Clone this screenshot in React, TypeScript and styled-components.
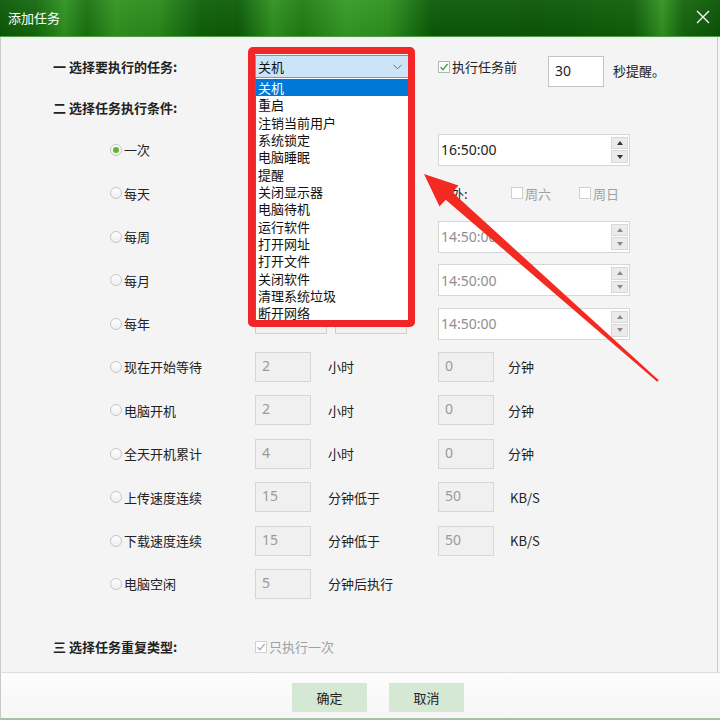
import React from "react";
import styled, { createGlobalStyle } from "styled-components";

const GlobalStyle = createGlobalStyle`
  html, body { margin: 0; padding: 0; background: #ffffff; }
  body { font-family: "Noto Sans CJK SC", "Noto Sans", sans-serif; }
  * { box-sizing: border-box; }
`;

const FONT = `"Noto Sans", "Noto Sans CJK SC", sans-serif`;

const Window = styled.div`
  position: relative;
  width: 720px;
  height: 720px;
  display: flex;
  flex-direction: column;
  overflow: hidden;
  background: #f4f4f4;
  color: #222;
  font-size: 13px;
`;

const TitleBar = styled.div`
  flex: none;
  height: 37px;
  display: flex;
  align-items: center;
  justify-content: space-between;
  padding: 0 10px 2px 8px;
  color: #ffffff;
  font-size: 13px;
  border-bottom: 1px solid #4f9f45;
  background:
    linear-gradient(to bottom, rgba(255, 255, 255, 0.05), rgba(0, 0, 0, 0.06)),
    linear-gradient(
      to right,
      #0b5a08 0%,
      #15690d 5%,
      #2f9220 9%,
      #1a720f 12%,
      #31931f 16%,
      #2a8a1b 22%,
      #0e600a 28%,
      #0c5c08 33%,
      #2f9220 38%,
      #1f7c14 42%,
      #359a25 48%,
      #2d901e 54%,
      #0b5a08 60%,
      #0a5707 75%,
      #0f5f0a 88%,
      #33921f 92%,
      #14650c 95%,
      #0a5507 100%
    );
`;

const Body = styled.div`
  flex: 1;
  display: flex;
  flex-direction: column;
  padding-top: 18px;
  border-left: 1px solid #c3cdc3;
  border-right: 1px solid #c8c8c8;
  margin-right: 2px;
`;

const SectionOne = styled.div`
  display: flex;
  align-items: flex-start;
  height: 32px;
`;

const Heading = styled.div`
  width: 254px;
  flex: none;
  padding-left: 52px;
  font-weight: bold;
  font-size: 13px;
  line-height: 23px;
  color: #222;
`;

const SectionTwo = styled.div`
  margin-top: 10px;
  height: 20px;
  display: flex;
  align-items: center;
`;

const SelectWrap = styled.div`
  position: relative;
  width: 154px;
  height: 23px;
  flex: none;
`;

const Combo = styled.div`
  height: 23px;
  display: flex;
  align-items: center;
  justify-content: space-between;
  padding: 0 6px 0 2px;
  background: #cce4f7;
  border: 1px solid #5a9ede;
  font-size: 13px;
  color: #111;
`;

const ListBox = styled.div`
  position: absolute;
  left: 0;
  top: 23px;
  width: 154px;
  height: 248px;
  padding-top: 1px;
  background: #ffffff;
  border: 1px solid #4a6fa5;
  border-top: none;
  overflow: hidden;
  z-index: 5;
`;

const ListItem = styled.div<{ $active?: boolean }>`
  height: 17.35px;
  line-height: 17.35px;
  padding-left: 2px;
  font-size: 13px;
  white-space: nowrap;
  overflow: hidden;
  color: ${(p) => (p.$active ? "#ffffff" : "#111")};
  background: ${(p) => (p.$active ? "#0078d7" : "transparent")};
`;

const RedFrame = styled.div`
  position: absolute;
  left: -7px;
  top: -8px;
  width: 167px;
  height: 280px;
  border: 7px solid #f22626;
  border-radius: 5px;
  z-index: 6;
  pointer-events: none;
`;

const CheckLabel = styled.label<{ $width?: number; $muted?: boolean; $indent?: number }>`
  display: flex;
  align-items: center;
  gap: 2px;
  width: ${(p) => (p.$width ? `${p.$width}px` : "auto")};
  margin-left: ${(p) => p.$indent ?? 0}px;
  flex: none;
  font-size: 13px;
  line-height: 23px;
  color: ${(p) => (p.$muted ? "#a0a0a0" : "#222")};
`;

const Box = styled.span<{ $muted?: boolean }>`
  width: 12px;
  height: 12px;
  flex: none;
  display: inline-flex;
  align-items: center;
  justify-content: center;
  background: #ffffff;
  border: 1px solid ${(p) => (p.$muted ? "#d0d0d0" : "#b4b4b4")};
`;

const TextBox = styled.div`
  width: 56px;
  height: 31px;
  flex: none;
  margin-top: 1px;
  padding: 4px 6px 0;
  background: #ffffff;
  border: 1px solid #c4c4c4;
  font-family: ${FONT};
  font-size: 14px;
  line-height: 20px;
  color: #222;
`;

const PlainText = styled.span`
  margin-left: 9px;
  margin-top: 4px;
  line-height: 23px;
  font-size: 13px;
  color: #222;
  white-space: nowrap;
`;

const Conditions = styled.div`
  margin-top: 11.3px;
  display: flex;
  flex-direction: column;
`;

const CondRow = styled.div`
  height: 43.4px;
  display: grid;
  grid-template-columns: 254px 73px 110px 1fr;
  align-items: center;
`;

const RadioCell = styled.div`
  display: flex;
  align-items: center;
  gap: 2px;
  padding-left: 109px;
  font-size: 13px;
  color: #222;
  white-space: nowrap;
`;

const Radio = styled.span<{ $checked?: boolean }>`
  position: relative;
  width: 12px;
  height: 12px;
  flex: none;
  border-radius: 50%;
  border: 1px solid #c6c6c6;
  background: linear-gradient(#ffffff, #eeeeee);
  &::after {
    content: "";
    display: ${(p) => (p.$checked ? "block" : "none")};
    position: absolute;
    left: 2px;
    top: 2px;
    width: 6px;
    height: 6px;
    border-radius: 50%;
    background: #5cb82e;
  }
`;

const Cell = styled.div<{ $left?: number }>`
  display: flex;
  align-items: center;
  padding-left: ${(p) => p.$left ?? 0}px;
`;

const NumBox = styled.div`
  width: 56px;
  height: 30px;
  flex: none;
  padding: 3px 6px 0;
  background: #f0f0f0;
  border: 1px solid #d6d6d6;
  font-family: ${FONT};
  font-size: 14px;
  line-height: 20px;
  color: #9a9a9a;
`;

const Unit = styled.span<{ $gap?: number }>`
  margin-left: ${(p) => p.$gap ?? 0}px;
  font-size: 13px;
  color: #222;
  white-space: nowrap;
`;

const GrayBox = styled.div<{ $left?: number }>`
  width: 72px;
  height: 24px;
  margin-left: ${(p) => p.$left ?? 0}px;
  margin-top: -4px;
  background: #f0f0f0;
  border: 1px solid #d0d0d0;
`;

const TimeBox = styled.div<{ $muted?: boolean }>`
  width: 192px;
  height: 32px;
  display: flex;
  align-items: center;
  justify-content: space-between;
  padding: 0 1px 0 2px;
  background: #ffffff;
  border: 1px solid #d6d6d6;
  font-family: ${FONT};
  font-size: 14px;
  color: ${(p) => (p.$muted ? "#8f8f8f" : "#222")};
`;

const Spin = styled.div`
  width: 17px;
  display: flex;
  flex-direction: column;
  gap: 1px;
`;

const SpinBtn = styled.div<{ $down?: boolean; $muted?: boolean }>`
  height: 12.5px;
  display: flex;
  align-items: center;
  justify-content: center;
  background: #ebebeb;
  border: 1px solid #d8d8d8;
  &::after {
    content: "";
    width: 0;
    height: 0;
    border-left: 3.5px solid transparent;
    border-right: 3.5px solid transparent;
    ${(p) =>
      p.$down
        ? `border-top: 4px solid ${p.$muted ? "#8a8a8a" : "#333"};`
        : `border-bottom: 4px solid ${p.$muted ? "#8a8a8a" : "#333"};`}
  }
`;

const ExceptText = styled.span`
  width: 73px;
  flex: none;
  font-size: 13px;
  color: #222;
`;

const SectionThree = styled.div`
  margin-top: 30.5px;
  height: 21px;
  display: flex;
  align-items: center;
`;

const Footer = styled.div`
  flex: none;
  height: 48px;
  display: flex;
  justify-content: center;
  align-items: flex-start;
  gap: 22px;
  padding: 10px 0 0 35px;
  border-top: 1px solid #dedede;
  border-bottom: 2px solid #a9bfa9;
  border-left: 1px solid #c3cdc3;
  background: linear-gradient(#fdfdfd, #f6f6f6);
`;

const Button = styled.button`
  width: 75px;
  height: 29px;
  border: none;
  border-radius: 0;
  background: #d4e8d3;
  font-family: "Noto Sans CJK SC", sans-serif;
  font-size: 13px;
  color: #222;
  padding: 0;
`;

const ArrowLayer = styled.svg`
  position: absolute;
  left: 0;
  top: 0;
  width: 720px;
  height: 720px;
  pointer-events: none;
  z-index: 10;
`;

const Check = ({ color }: { color: string }) => (
  <svg width="10" height="10" viewBox="0 0 10 10">
    <path d="M1.5 5.2 L4 7.8 L8.6 2" fill="none" stroke={color} strokeWidth="1.4" />
  </svg>
);

const TimeInput = ({ value, muted }: { value: string; muted?: boolean }) => (
  <TimeBox $muted={muted}>
    <span>{value}</span>
    <Spin>
      <SpinBtn $muted={muted} />
      <SpinBtn $down $muted={muted} />
    </Spin>
  </TimeBox>
);

const taskItems = [
  "关机",
  "重启",
  "注销当前用户",
  "系统锁定",
  "电脑睡眠",
  "提醒",
  "关闭显示器",
  "电脑待机",
  "运行软件",
  "打开网址",
  "打开文件",
  "关闭软件",
  "清理系统垃圾",
  "断开网络",
];

type Row = {
  label: string;
  checked?: boolean;
  kind: "time" | "except" | "year" | "num";
  time?: string;
  muted?: boolean;
  a?: string;
  unitA?: string;
  b?: string;
  unitB?: string;
};

const rows: Row[] = [
  { label: "一次", checked: true, kind: "time", time: "16:50:00" },
  { label: "每天", kind: "except" },
  { label: "每周", kind: "time", time: "14:50:00", muted: true },
  { label: "每月", kind: "time", time: "14:50:00", muted: true },
  { label: "每年", kind: "year", time: "14:50:00", muted: true },
  { label: "现在开始等待", kind: "num", a: "2", unitA: "小时", b: "0", unitB: "分钟" },
  { label: "电脑开机", kind: "num", a: "2", unitA: "小时", b: "0", unitB: "分钟" },
  { label: "全天开机累计", kind: "num", a: "4", unitA: "小时", b: "0", unitB: "分钟" },
  { label: "上传速度连续", kind: "num", a: "15", unitA: "分钟低于", b: "50", unitB: "KB/S" },
  { label: "下载速度连续", kind: "num", a: "15", unitA: "分钟低于", b: "50", unitB: "KB/S" },
  { label: "电脑空闲", kind: "num", a: "5", unitA: "分钟后执行" },
];

const ConditionRow = ({ row }: { row: Row }) => (
  <CondRow>
    <RadioCell>
      <Radio $checked={row.checked} />
      {row.label}
    </RadioCell>
    {row.kind === "num" ? (
      <>
        <Cell>
          <NumBox>{row.a}</NumBox>
        </Cell>
        <Cell>
          <Unit>{row.unitA}</Unit>
        </Cell>
        <Cell>
          {row.b !== undefined && <NumBox>{row.b}</NumBox>}
          {row.unitB && <Unit $gap={row.unitB === "KB/S" ? 16 : 14}>{row.unitB}</Unit>}
        </Cell>
      </>
    ) : row.kind === "year" ? (
      <>
        <Cell>
          <GrayBox />
        </Cell>
        <Cell>
          <GrayBox $left={7} />
        </Cell>
        <Cell>
          <TimeInput value={row.time!} muted />
        </Cell>
      </>
    ) : row.kind === "except" ? (
      <>
        <Cell />
        <Cell />
        <Cell>
          <ExceptText>例外:</ExceptText>
          <CheckLabel $width={68} $muted>
            <Box $muted />
            周六
          </CheckLabel>
          <CheckLabel $muted>
            <Box $muted />
            周日
          </CheckLabel>
        </Cell>
      </>
    ) : (
      <>
        <Cell />
        <Cell />
        <Cell>
          <TimeInput value={row.time!} muted={row.muted} />
        </Cell>
      </>
    )}
  </CondRow>
);

export default function App() {
  return (
    <>
      <GlobalStyle />
      <Window>
        <TitleBar>
          <span>添加任务</span>
          <svg width="14" height="14" viewBox="0 0 14 14">
            <path d="M1 1 L13 13 M13 1 L1 13" stroke="#ffffff" strokeWidth="1.3" />
          </svg>
        </TitleBar>
        <Body>
          <SectionOne>
            <Heading>一 选择要执行的任务:</Heading>
            <SelectWrap>
              <Combo>
                <span>关机</span>
                <svg width="9" height="6" viewBox="0 0 9 6">
                  <path d="M0.5 0.8 L4.5 4.8 L8.5 0.8" fill="none" stroke="#6b6b6b" strokeWidth="1" />
                </svg>
              </Combo>
              <ListBox>
                {taskItems.map((t, i) => (
                  <ListItem key={t} $active={i === 0}>
                    {t}
                  </ListItem>
                ))}
              </ListBox>
              <RedFrame />
            </SelectWrap>
            <CheckLabel $width={110} $indent={29}>
              <Box>
                <Check color="#3fa535" />
              </Box>
              执行任务前
            </CheckLabel>
            <TextBox>30</TextBox>
            <PlainText>秒提醒。</PlainText>
          </SectionOne>
          <SectionTwo>
            <Heading>二 选择任务执行条件:</Heading>
          </SectionTwo>
          <Conditions>
            {rows.map((r) => (
              <ConditionRow key={r.label} row={r} />
            ))}
          </Conditions>
          <SectionThree>
            <Heading>三 选择任务重复类型:</Heading>
            <CheckLabel $muted>
              <Box $muted>
                <Check color="#b0b0b0" />
              </Box>
              只执行一次
            </CheckLabel>
          </SectionThree>
        </Body>
        <Footer>
          <Button>确定</Button>
          <Button>取消</Button>
        </Footer>
        <ArrowLayer viewBox="0 0 720 720">
          <polygon
            points="424,174 458.5,185.5 452.3,192.3 658.8,380.2 657.2,381.8 445.7,199.7 439.5,206.5"
            fill="#f22a22"
          />
        </ArrowLayer>
      </Window>
    </>
  );
}
